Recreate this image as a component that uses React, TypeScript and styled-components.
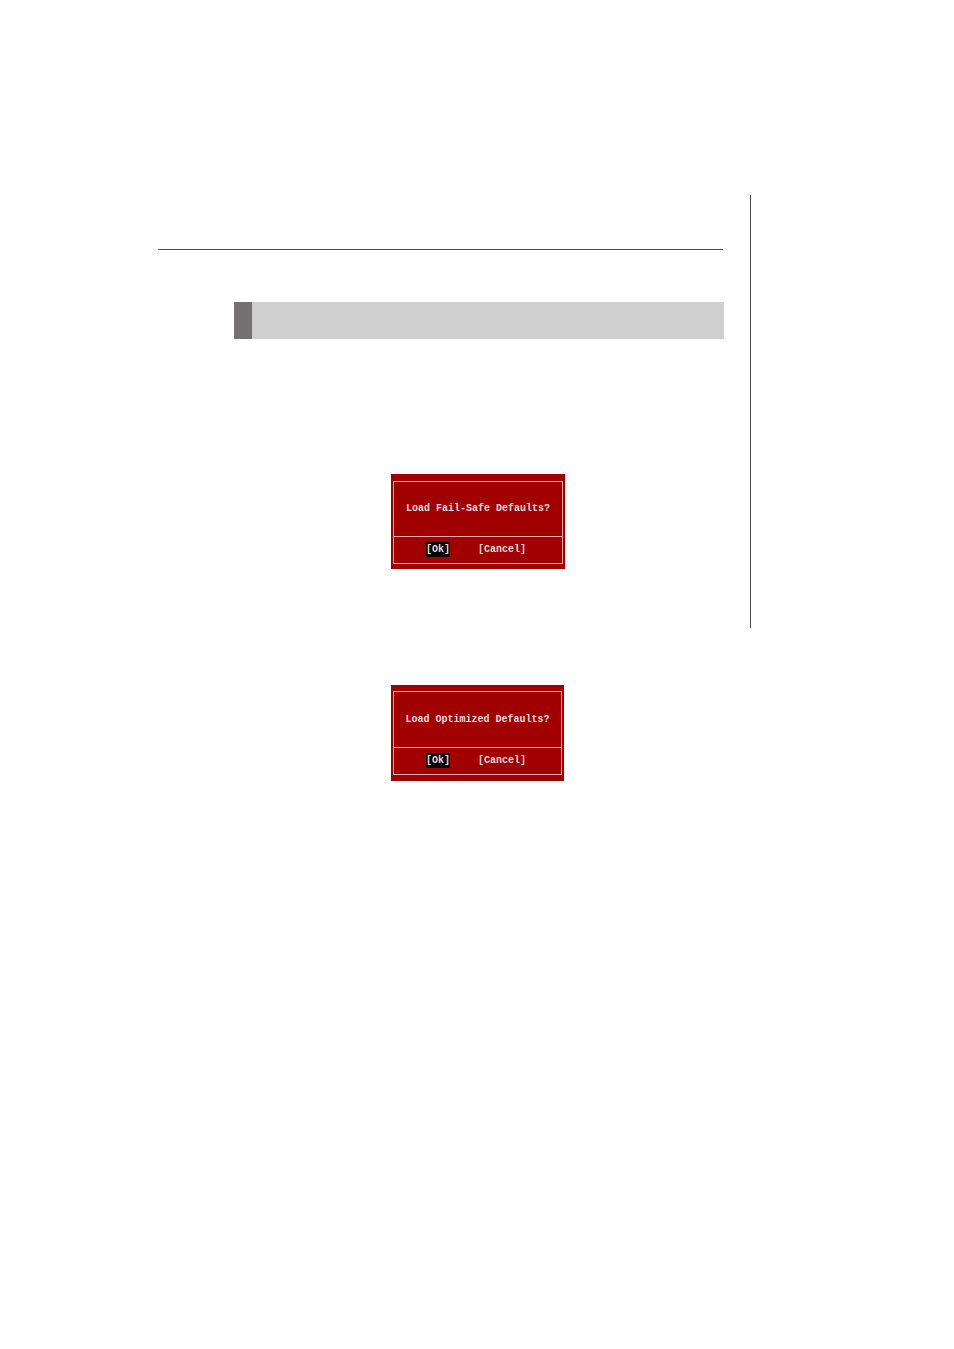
import React from "react";
import styled, { createGlobalStyle } from "styled-components";

const GlobalStyle = createGlobalStyle`
  *, *::before, *::after { box-sizing: border-box; }
  body { margin: 0; background: #fff; }
`;

const Page = styled.main`
  padding: 195px 203px 120px 158px;
`;

const RuledSection = styled.section`
  padding: 0 26px 59px 0;
  border-right: 1px solid #48484a;
`;

const HeaderRule = styled.hr`
  margin: 0 1px 52px 0;
  padding-top: 54px;
  border: 0;
  border-bottom: 1px solid #48484a;
`;

const Column = styled.div`
  margin-left: 76px;
`;

const Banner = styled.div`
  height: 37px;
  margin-bottom: 135px;
  border-left: 18px solid #737172;
  background: #cfcfcf;
`;

const PlainSection = styled.section`
  padding: 57px 27px 0 0;
`;

const Dialog = styled.div<{ $wide?: boolean }>`
  width: ${(p) => (p.$wide ? 174 : 173)}px;
  margin-left: 157px;
  padding: ${(p) => (p.$wide ? "7px 2px 5px" : "6px 2px 6px")};
  background: #a00000;
  color: #f0dcdc;
  font: bold 10px/15px "Liberation Mono", monospace;
`;

const Frame = styled.div`
  border: 1px solid #e6aeae;
`;

const Message = styled.p<{ $wide?: boolean }>`
  margin: 0;
  padding: ${(p) => (p.$wide ? 19 : 20)}px 0 20px;
  display: flex;
  justify-content: center;
  white-space: nowrap;
`;

const Actions = styled.div`
  display: flex;
  gap: 28px;
  padding: 5px 0 6px 32px;
  border-top: 1px solid #e6aeae;
`;

const Choice = styled.button<{ $selected?: boolean }>`
  margin: 0;
  padding: 0;
  border: 0;
  background: ${(p) => (p.$selected ? "#000" : "transparent")};
  color: inherit;
  font: inherit;
`;

function ConfirmDialog({ message, wide }: { message: string; wide?: boolean }) {
  return (
    <Dialog role="dialog" aria-label={message} $wide={wide}>
      <Frame>
        <Message $wide={wide}>{message}</Message>
        <Actions>
          <Choice type="button" $selected>[Ok]</Choice>
          <Choice type="button">[Cancel]</Choice>
        </Actions>
      </Frame>
    </Dialog>
  );
}

export default function App() {
  return (
    <>
      <GlobalStyle />
      <Page>
        <RuledSection>
          <HeaderRule />
          <Column>
            <Banner />
            <ConfirmDialog message="Load Fail-Safe Defaults?" wide />
          </Column>
        </RuledSection>
        <PlainSection>
          <Column>
            <ConfirmDialog message="Load Optimized Defaults?" />
          </Column>
        </PlainSection>
      </Page>
    </>
  );
}
